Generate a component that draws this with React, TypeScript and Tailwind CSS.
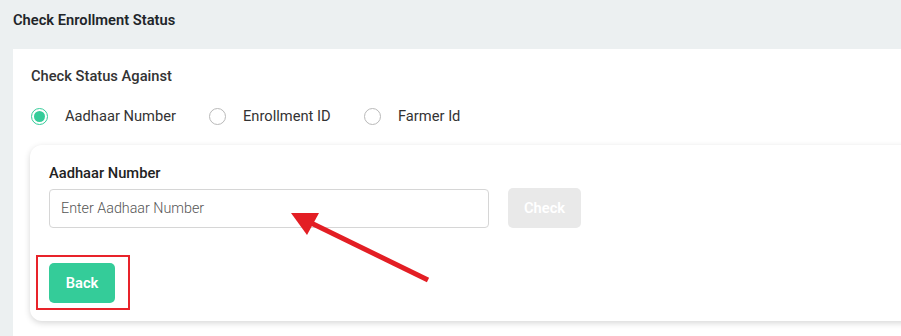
import { useState } from "react";

const options = ["Aadhaar Number", "Enrollment ID", "Farmer Id"];

function Radio({ label, checked, onClick, width }: { label: string; checked: boolean; onClick: () => void; width: string }) {
    return (
        <button type="button" onClick={onClick} className={`flex items-center ${width} text-left`}>
            <span className={`w-[17px] h-[17px] rounded-full flex items-center justify-center ${checked ? "border border-[#34cc99]" : "border border-[#b9b9b9]"}`}>
                {checked && <span className="w-[11px] h-[11px] rounded-full bg-[#34cc99]" />}
            </span>
            <span className="ml-[17px] text-[14.7px] leading-[20px] text-[#333]">{label}</span>
        </button>
    );
}

export default function App() {
    const [selected, setSelected] = useState<number>(0);

    return (
        <div className="relative w-[901px] h-[336px] overflow-hidden bg-[#ecf0f1] font-['Roboto',sans-serif]">
            {/* header */}
            <div className="h-[40px] flex items-center px-[13px] text-[14.7px] font-semibold text-[#212529]">
                Check Enrollment Status
            </div>

            {/* white panel */}
            <div className="mt-[9px] ml-[13px] bg-white pt-[17px] pl-[18px] h-[300px]">
                <div className="text-[14.7px] leading-[20px] font-medium text-[#333]">Check Status Against</div>

                <div className="mt-[20px] flex items-center">
                    {options.map((o, i) => (
                        <Radio
                            key={o}
                            label={o}
                            checked={selected === i}
                            onClick={() => setSelected(i)}
                            width={i === 0 ? "w-[178px]" : i === 1 ? "w-[155px]" : "w-auto"}
                        />
                    ))}
                </div>

                {/* card */}
                <div className="mt-[19px] ml-[-1px] mr-[-20px] rounded-xl bg-white shadow-[0_2px_6px_rgba(0,0,0,0.16)] pt-[18px] pl-[19px] pb-[18px]">
                    <div className="text-[14.7px] leading-[20px] font-medium text-[#222]">{options[selected]}</div>
                    <div className="mt-[5px] flex items-center">
                        <input
                            className="w-[440px] h-[39px] rounded-[4px] border border-[#d6d6d6] px-[11px] text-[14.3px] font-light text-[#333] placeholder:text-[#555] outline-none"
                            placeholder={`Enter ${options[selected]}`}
                        />
                        <button type="button" className="ml-[19px] w-[73px] h-[40px] rounded-[5px] bg-[#e9e9e9] text-white text-[14.7px] font-semibold">
                            Check
                        </button>
                    </div>
                    <div className="mt-[35px] relative w-[66px]">
                        <button type="button" className="w-[66px] h-[40px] rounded-[5px] bg-[#34cc99] text-white text-[14.7px] font-semibold">
                            Back
                        </button>
                        {/* red highlight box */}
                        <div className="absolute left-[-13px] top-[-8px] w-[94px] h-[55px] border-2 border-[#e8232a] pointer-events-none" />
                    </div>
                </div>
            </div>

            {/* annotation arrow */}
            <svg className="absolute left-0 top-0 pointer-events-none" width="901" height="336" viewBox="0 0 901 336">
                <line x1="428" y1="280" x2="305" y2="220" stroke="#e31e24" strokeWidth="5" />
                <polygon points="291,213 319,213 307,235" fill="#e31e24" />
            </svg>
        </div>
    );
}
